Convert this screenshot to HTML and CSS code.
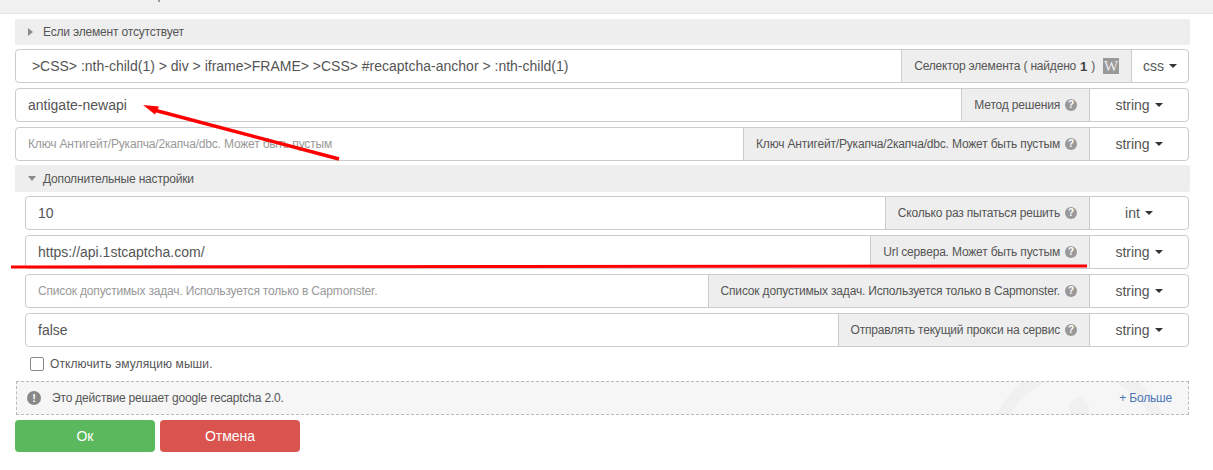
FILE: index.html
```html
<!DOCTYPE html>
<html lang="ru">
<head>
<meta charset="utf-8">
<title>Recaptcha</title>
<link rel="stylesheet" href="styles.css">
</head>
<body>
<div class="topbar"><span class="cut-glyph"></span></div>
<main class="form">
  <div class="section"><span class="tri tri-right"></span>Если элемент отсутствует</div>
  <div class="group">
    <div class="field field-selector">&nbsp;&gt;CSS&gt; :nth-child(1) &gt; div &gt; iframe&gt;FRAME&gt; &gt;CSS&gt; #recaptcha-anchor &gt; :nth-child(1)</div>
    <div class="addon addon-selector">Селектор элемента ( найдено <b class="count">1</b> )<span class="wiki">W</span></div>
    <div class="type type-small">css<span class="caret"></span></div>
  </div>
  <div class="group">
    <div class="field">antigate-newapi</div>
    <div class="addon">Метод решения<span class="help">?</span></div>
    <div class="type">string<span class="caret"></span></div>
  </div>
  <div class="group">
    <div class="field placeholder">Ключ Антигейт/Рукапча/2капча/dbc. Может быть пустым</div>
    <div class="addon">Ключ Антигейт/Рукапча/2капча/dbc. Может быть пустым<span class="help">?</span></div>
    <div class="type">string<span class="caret"></span></div>
  </div>
  <div class="section section-sub"><span class="tri tri-down"></span>Дополнительные настройки</div>
  <div class="nested">
    <div class="group">
      <div class="field">10</div>
      <div class="addon">Сколько раз пытаться решить<span class="help">?</span></div>
      <div class="type">int<span class="caret"></span></div>
    </div>
    <div class="group">
      <div class="field">https://api.1stcaptcha.com/</div>
      <div class="addon">Url сервера. Может быть пустым<span class="help">?</span></div>
      <div class="type">string<span class="caret"></span></div>
    </div>
    <div class="group">
      <div class="field placeholder">Список допустимых задач. Используется только в Capmonster.</div>
      <div class="addon">Список допустимых задач. Используется только в Capmonster.<span class="help">?</span></div>
      <div class="type">string<span class="caret"></span></div>
    </div>
    <div class="group">
      <div class="field">false</div>
      <div class="addon">Отправлять текущий прокси на сервис<span class="help">?</span></div>
      <div class="type">string<span class="caret"></span></div>
    </div>
    <label class="check"><span class="box"></span>Отключить эмуляцию мыши.</label>
  </div>
  <div class="info">
    <svg class="watermark" width="200" height="32" viewBox="0 0 200 32" aria-hidden="true">
      <circle cx="100" cy="72" r="86" fill="none" stroke="#f0f0f0" stroke-width="12"/>
      <circle cx="99" cy="26" r="10" fill="#f0f0f0"/>
    </svg>
    <span class="alert">!</span>
    <span class="info-text">Это действие решает google recaptcha 2.0.</span>
    <a class="more">+ Больше</a>
  </div>
  <div class="actions">
    <button class="btn btn-ok">Ок</button>
    <button class="btn btn-cancel">Отмена</button>
  </div>
</main>
<svg class="marks" width="1213" height="470" viewBox="0 0 1213 470" aria-hidden="true">
  <path d="M339 159 L154 110" stroke="#f00" stroke-width="3.500" fill="none"/>
  <path d="M143 105 L159 106.500 L155 114.500 Z" fill="#f00"/>
  <path d="M11 267 L1087 266" stroke="#f00" stroke-width="3" fill="none"/>
</svg>
</body>
</html>
```
FILE: styles.css
```css
* { box-sizing: border-box; }
html, body { margin: 0; padding: 0; }
body {
  position: relative;
  width: 1213px;
  height: 470px;
  overflow: hidden;
  background: #fff;
  font-family: "Liberation Sans", Arial, sans-serif;
  font-size: 12px;
  letter-spacing: -0.18px;
  color: #555;
}
.topbar {
  position: relative;
  height: 14px;
  background: #f0f0f0;
  border-bottom: 1px solid #e4e4e4;
}
.cut-glyph {
  position: absolute;
  left: 158px;
  top: 0;
  width: 2px;
  height: 2px;
  background: #8f9aa5;
}
.form {
  padding: 5px 24px 0 15px;
  display: flex;
  flex-direction: column;
}
.section {
  width: 1175px;
  height: 26px;
  display: flex;
  align-items: center;
  padding-left: 13px;
  background: #eee;
  border-radius: 2px;
  color: #555;
  margin-bottom: 4px;
}
.section-sub {
  height: 27px;
  margin-top: -1px;
  margin-bottom: 4px;
}
.tri { display: inline-block; width: 0; height: 0; }
.tri-right {
  border-left: 5px solid #8a8a8a;
  border-top: 4px solid transparent;
  border-bottom: 4px solid transparent;
  margin-right: 10px;
}
.tri-down {
  border-top: 5px solid #8a8a8a;
  border-left: 4px solid transparent;
  border-right: 4px solid transparent;
  margin-right: 7px;
}
.group {
  width: 1174px;
  height: 34px;
  display: flex;
  border: 1px solid #ccc;
  border-radius: 4px;
  margin-bottom: 5px;
  background: #fff;
}
.field {
  flex: 1;
  min-width: 0;
  display: flex;
  align-items: center;
  padding-left: 12px;
  font-size: 14px;
  letter-spacing: 0;
  color: #555;
  white-space: pre;
}
.placeholder { font-size: 12px; letter-spacing: -0.18px; color: #999; }
.addon {
  display: flex;
  align-items: center;
  padding: 0 12px;
  background: #eee;
  border-left: 1px solid #ccc;
  border-right: 1px solid #ccc;
  color: #555;
  white-space: nowrap;
}
.count { color: #444; font-size: 13px; margin: 0 4px; }
.wiki {
  width: 16px;
  height: 16px;
  margin-left: 8px;
  background: #999;
  color: #eee;
  font-family: "Liberation Serif", serif;
  font-size: 15px;
  letter-spacing: 0;
  line-height: 16px;
  text-align: center;
}
.help {
  width: 12px;
  height: 12px;
  margin-left: 5px;
  border-radius: 50%;
  background: #999;
  color: #fff;
  font-size: 10px;
  font-weight: bold;
  letter-spacing: 0;
  line-height: 12px;
  text-align: center;
}
.type {
  width: 98px;
  display: flex;
  align-items: center;
  justify-content: center;
  font-size: 14px;
  letter-spacing: 0;
  color: #555;
}
.type-small { width: 56px; }
.caret {
  width: 0;
  height: 0;
  margin-left: 5px;
  border-top: 4px solid #333;
  border-left: 4px solid transparent;
  border-right: 4px solid transparent;
}
.nested { padding-left: 10px; display: flex; flex-direction: column; }
.nested .group { width: 1164px; }
.check {
  display: flex;
  align-items: center;
  height: 14px;
  margin: 5px 0 0 5px;
  color: #555;
  letter-spacing: 0.1px;
}
.box {
  width: 14px;
  height: 14px;
  margin-right: 6px;
  border: 1px solid #888;
  border-radius: 2px;
  background: #fff;
}
.info {
  position: relative;
  width: 1173px;
  height: 34px;
  margin: 10px 0 0 1px;
  display: flex;
  align-items: center;
  padding-left: 10px;
  border: 1px dashed #bbb;
  background: #f6f6f6;
  overflow: hidden;
}
.watermark { position: absolute; right: 8px; top: 0; }
.alert {
  position: relative;
  width: 14px;
  height: 14px;
  border-radius: 50%;
  background: #888;
  color: #fff;
  font-size: 11px;
  font-weight: bold;
  line-height: 14px;
  text-align: center;
}
.info-text { position: relative; margin-left: 11px; }
.more { position: relative; margin-left: auto; margin-right: 16px; color: #4a76b8; }
.actions { display: flex; gap: 5px; margin-top: 5px; }
.btn {
  width: 140px;
  height: 32px;
  border: 0;
  border-radius: 4px;
  color: #fff;
  font-family: inherit;
  font-size: 14px;
}
.btn-ok { background: #5cb85c; }
.btn-cancel { background: #d9534f; }
.marks { position: absolute; left: 0; top: 0; pointer-events: none; }
```
